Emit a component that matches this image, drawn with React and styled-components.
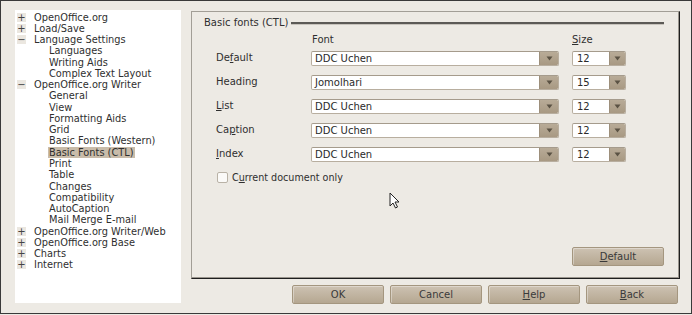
import React from 'react';
import styled, { createGlobalStyle } from 'styled-components';

const Global = createGlobalStyle`
  html, body {
    margin: 0;
    padding: 0;
    background: #edeae4;
  }
  body {
    font-family: "DejaVu Sans", "Liberation Sans", sans-serif;
    font-size: 10px;
    color: #2f2f2f;
  }
`;

const Dialog = styled.div`
  position: relative;
  width: 692px;
  height: 314px;
  box-sizing: border-box;
  border: 1px solid #3a3a3a;
  background: #edeae4;
  display: flex;
  align-items: flex-start;
  gap: 10px;
  padding: 9px 11px 0 14px;
`;

const Tree = styled.ul`
  list-style: none;
  margin: 0;
  padding: 1.4px 0 0 0;
  width: 166px;
  height: 293px;
  box-sizing: border-box;
  background: #ffffff;
  font-size: 9.8px;
`;

const TreeRow = styled.li`
  display: flex;
  align-items: center;
  height: 11.27px;
  padding-left: ${p => (p.$level ? 33 : 2)}px;
  white-space: nowrap;
`;

const Expander = styled.span`
  width: 9px;
  height: 9px;
  margin-right: 7px;
  background: #ebe7e0;
  color: #444;
  font-size: 10px;
  line-height: 9px;
  text-align: center;
`;

const TreeLabel = styled.span`
  padding: 0 1px;
  line-height: 11px;
  background: ${p => (p.$selected ? '#c9bcaa' : 'transparent')};
`;

const RightColumn = styled.div`
  display: flex;
  flex-direction: column;
  width: 489px;
  margin-top: 1px;
`;

const Panel = styled.div`
  height: 268px;
  box-sizing: border-box;
  border-style: solid;
  border-width: 1px;
  border-color: #a29e96 #1e1e1e #1e1e1e #a29e96;
  box-shadow: inset -1px -1px 0 #9a958d;
  display: flex;
  flex-direction: column;
  padding: 4px 15px 12px 12px;
`;

const GroupHeader = styled.div`
  display: flex;
  align-items: center;
  height: 12px;
  gap: 3px;
`;

const GroupRule = styled.div`
  flex: 1;
  height: 2px;
  background: #5c5a56;
  border-bottom: 1px solid #c8c4bd;
  margin-top: 3px;
`;

const FieldGrid = styled.div`
  display: grid;
  grid-template-columns: 82px 248px 54px;
  grid-template-rows: 12px repeat(5, 24px);
  column-gap: 13px;
  align-items: center;
  margin: 6px 0 0 12px;
`;

const ColHead = styled.div`
  padding-left: ${p => p.$pad || 0}px;
  line-height: 12px;
`;

const RowLabel = styled.div`
  margin-top: -2px;
`;

const Field = styled.div`
  display: flex;
  height: 15px;
  box-sizing: border-box;
  border: 1px solid #b8ae9f;
  border-top-color: #a59b8c;
  border-radius: 2px;
  background: #ffffff;
  overflow: hidden;
`;

const FieldText = styled.div`
  flex: 1;
  padding-left: ${p => p.$pad || 3}px;
  line-height: 13px;
  color: #2a2a2a;
`;

const DropButton = styled.div`
  width: ${p => p.$w}px;
  display: flex;
  align-items: center;
  justify-content: center;
  background: linear-gradient(#b8ab97, #a89983);
  border-left: 1px solid #9d8f7b;
`;

const CheckRow = styled.label`
  display: flex;
  align-items: center;
  gap: 4px;
  margin: 5px 0 0 13px;
  height: 12px;
  font-size: 9.6px;
`;

const CheckBox = styled.span`
  width: 9px;
  height: 9px;
  border: 1px solid #b9b2a6;
  border-radius: 2px;
  background: #fbfaf8;
`;

const PanelFooter = styled.div`
  margin-top: auto;
  display: flex;
  justify-content: flex-end;
`;

const Button = styled.div`
  width: 92px;
  height: 19px;
  box-sizing: border-box;
  display: flex;
  align-items: center;
  justify-content: center;
  border: 1px solid #a4967f;
  border-radius: 2px;
  background: linear-gradient(#cdc2b2, #b5a791);
  box-shadow: inset 1px 1px 0 rgba(255, 255, 255, 0.35);
  color: #3a3a3a;
`;

const ButtonBar = styled.div`
  display: flex;
  justify-content: flex-end;
  gap: 6px;
  margin-top: 6px;
  padding-right: 2px;
`;

const U = styled.span`
  text-decoration: underline;
`;

const Cursor = styled.svg`
  position: absolute;
  left: 388px;
  top: 191px;
`;

const tree = [
  { t: 'OpenOffice.org', s: '+' },
  { t: 'Load/Save', s: '+' },
  { t: 'Language Settings', s: '−' },
  { t: 'Languages', l: 1 },
  { t: 'Writing Aids', l: 1 },
  { t: 'Complex Text Layout', l: 1 },
  { t: 'OpenOffice.org Writer', s: '−' },
  { t: 'General', l: 1 },
  { t: 'View', l: 1 },
  { t: 'Formatting Aids', l: 1 },
  { t: 'Grid', l: 1 },
  { t: 'Basic Fonts (Western)', l: 1 },
  { t: 'Basic Fonts (CTL)', l: 1, sel: true },
  { t: 'Print', l: 1 },
  { t: 'Table', l: 1 },
  { t: 'Changes', l: 1 },
  { t: 'Compatibility', l: 1 },
  { t: 'AutoCaption', l: 1 },
  { t: 'Mail Merge E-mail', l: 1 },
  { t: 'OpenOffice.org Writer/Web', s: '+' },
  { t: 'OpenOffice.org Base', s: '+' },
  { t: 'Charts', s: '+' },
  { t: 'Internet', s: '+' },
];

const rows = [
  { label: <>De<U>f</U>ault</>, font: 'DDC Uchen', size: '12' },
  { label: <>Heading</>, font: 'Jomolhari', size: '15' },
  { label: <><U>L</U>ist</>, font: 'DDC Uchen', size: '12' },
  { label: <>Ca<U>p</U>tion</>, font: 'DDC Uchen', size: '12' },
  { label: <><U>I</U>ndex</>, font: 'DDC Uchen', size: '12' },
];

const Arrow = () => (
  <svg width="7" height="5" viewBox="0 0 7 5">
    <path d="M0.5 0.5 L6.5 0.5 L3.5 4.5 Z" fill="#5b5244" />
  </svg>
);

const App = () => (
  <>
    <Global />
    <Dialog>
      <Tree>
        {tree.map(item => (
          <TreeRow key={item.t} $level={item.l}>
            {!item.l && <Expander>{item.s}</Expander>}
            <TreeLabel $selected={item.sel}>{item.t}</TreeLabel>
          </TreeRow>
        ))}
      </Tree>

      <RightColumn>
        <Panel>
          <GroupHeader>
            <span>Basic fonts (CTL)</span>
            <GroupRule />
          </GroupHeader>

          <FieldGrid>
            <span />
            <ColHead $pad={1}>Font</ColHead>
            <ColHead><U>S</U>ize</ColHead>
            {rows.map((r, i) => (
              <React.Fragment key={i}>
                <RowLabel>{r.label}</RowLabel>
                <Field>
                  <FieldText>{r.font}</FieldText>
                  <DropButton $w={18}><Arrow /></DropButton>
                </Field>
                <Field>
                  <FieldText $pad={4}>{r.size}</FieldText>
                  <DropButton $w={15}><Arrow /></DropButton>
                </Field>
              </React.Fragment>
            ))}
          </FieldGrid>

          <CheckRow>
            <CheckBox />
            <span>C<U>u</U>rrent document only</span>
          </CheckRow>

          <PanelFooter>
            <Button><span><U>D</U>efault</span></Button>
          </PanelFooter>
        </Panel>

        <ButtonBar>
          <Button>OK</Button>
          <Button>Cancel</Button>
          <Button><span><U>H</U>elp</span></Button>
          <Button><span><U>B</U>ack</span></Button>
        </ButtonBar>
      </RightColumn>

      <Cursor width="12" height="17" viewBox="0 0 12 17">
        <path d="M1 1 L1 14 L4 11 L6.5 16 L8.5 15 L6 10 L10 10 Z" fill="#ffffff" stroke="#222" strokeWidth="1" strokeLinejoin="round" />
      </Cursor>
    </Dialog>
  </>
);

export default App;
